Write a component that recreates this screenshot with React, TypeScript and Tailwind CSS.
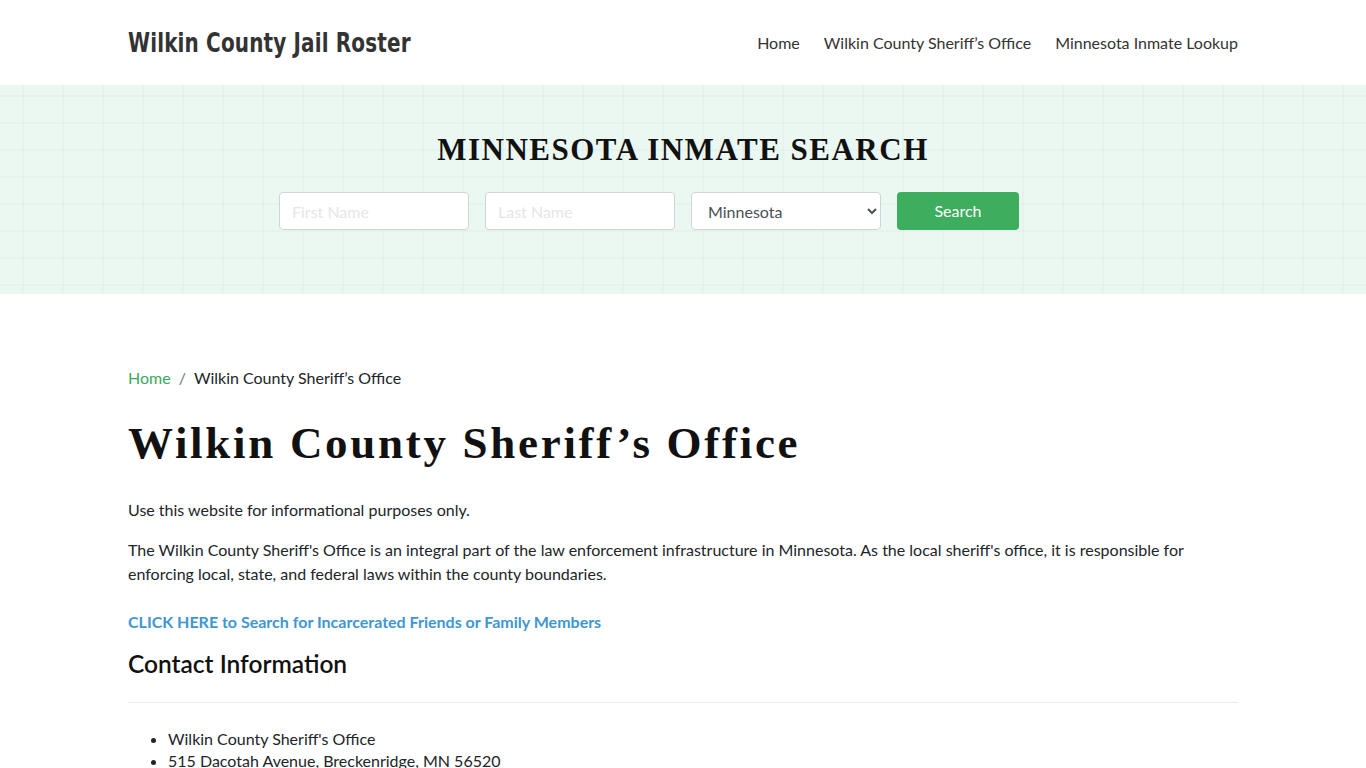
import React from "react"

const navLinks = ["Home", "Wilkin County Sheriff’s Office", "Minnesota Inmate Lookup"]

const contactItems = ["Wilkin County Sheriff's Office", "515 Dacotah Avenue, Breckenridge, MN 56520"]

export default function App() {
  return (
    <div className="min-h-screen bg-white text-[#212529] font-['Lato','Noto_Sans',sans-serif]">
      {/* top bar */}
      <header className="h-[85px] bg-white">
        <div className="mx-auto flex h-full w-[1110px] items-center justify-between">
          <a className="mt-0.5 inline-block origin-left scale-x-[0.74] font-['DejaVu_Sans',sans-serif] text-[27px] font-bold tracking-[0.2px] text-[#333]">
            Wilkin County Jail Roster
          </a>
          <nav className="flex items-center gap-6 text-[16px] text-[#333]">
            {navLinks.map((link) => (
              <a key={link}>{link}</a>
            ))}
          </nav>
        </div>
      </header>

      {/* search strip with grid backdrop */}
      <section className="h-[209px] bg-[#ebf8f1] bg-[linear-gradient(to_right,rgba(120,140,130,0.045)_2px,transparent_2px),linear-gradient(to_bottom,rgba(120,140,130,0.045)_2px,transparent_2px)] bg-[size:40px_27px] bg-[position:22px_10px]">
        <div className="mx-auto w-[1110px] pt-[47px]">
          <h2 className="text-center font-['Liberation_Serif',serif] text-[31px] font-bold uppercase leading-[36px] tracking-[1.5px] text-[#111]">
            Minnesota Inmate Search
          </h2>
          <form className="mt-[24px] flex gap-4 pl-[151px]">
            <input
              placeholder="First Name"
              className="h-[38px] w-[190px] rounded-[4px] border border-[#ced4da] bg-white px-3 text-[16px] placeholder:text-[#e6e6e6]"
            />
            <input
              placeholder="Last Name"
              className="h-[38px] w-[190px] rounded-[4px] border border-[#ced4da] bg-white px-3 text-[16px] placeholder:text-[#e6e6e6]"
            />
            <select className="h-[38px] w-[190px] rounded-[4px] border border-[#ced4da] bg-white px-3 text-[16px] text-[#495057]">
              <option>Minnesota</option>
            </select>
            <button
              type="button"
              className="h-[38px] w-[122px] rounded-[4px] bg-[#3cae5e] text-[16px] text-white"
            >
              Search
            </button>
          </form>
        </div>
      </section>

      {/* page body */}
      <main className="mx-auto w-[1110px] pt-[72px]">
        <div className="flex items-center gap-2 text-[16px] leading-6">
          <a className="text-[#3aaa5c]">Home</a>
          <span className="text-[#6c757d]">/</span>
          <span className="text-[#212529]">Wilkin County Sheriff’s Office</span>
        </div>

        <h1 className="mt-[25px] font-['Liberation_Serif',serif] text-[45px] font-bold leading-[56px] tracking-[2.7px] text-[#111]">
          Wilkin County Sheriff’s Office
        </h1>

        <p className="mt-[27px] text-[16px] leading-6">Use this website for informational purposes only.</p>
        <p className="mt-4 text-[16px] leading-6">
          The Wilkin County Sheriff's Office is an integral part of the law enforcement infrastructure in Minnesota. As the
          local sheriff's office, it is responsible for enforcing local, state, and federal laws within the county
          boundaries.
        </p>

        <a className="mt-[24px] block text-[16px] font-bold leading-6 text-[#3e97d1]">
          CLICK HERE to Search for Incarcerated Friends or Family Members
        </a>

        <h3 className="mt-[12px] text-[24.5px] font-semibold leading-[36px] text-[#111]">Contact Information</h3>
        <hr className="mt-[20px] border-t border-[#ebebeb]" />

        <ul className="mt-[25px] list-disc pl-10 text-[16px] leading-[22px]">
          {contactItems.map((item) => (
            <li key={item}>{item}</li>
          ))}
        </ul>
      </main>
    </div>
  )
}
